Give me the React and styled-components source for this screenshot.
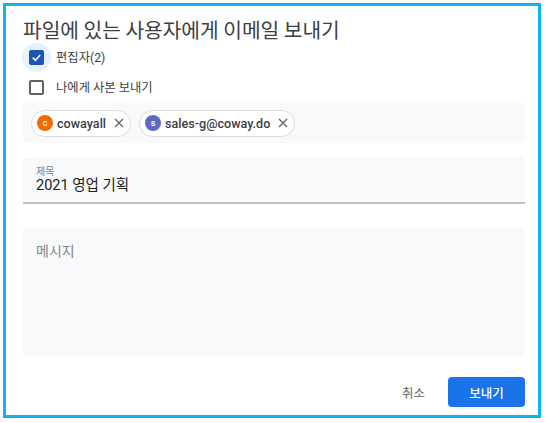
import React from "react";
import styled, { createGlobalStyle } from "styled-components";

const GlobalStyle = createGlobalStyle`
    html, body {
        margin: 0;
        padding: 0;
        background: #ffffff;
    }
    body {
        font-family: Roboto, "Noto Sans CJK KR", "Noto Sans", sans-serif;
        color: #3c4043;
    }
`;

const Frame = styled.div`
    box-sizing: border-box;
    margin: 3px;
    width: 538px;
    height: 415px;
    border: 3px solid #12b2f1;
    padding: 11px 13px 0 17px;
    display: flex;
    flex-direction: column;
`;

const Title = styled.h2`
    margin: 0;
    font-family: "Noto Sans CJK KR", sans-serif;
    font-size: 20.3px;
    line-height: 25px;
    font-weight: 400;
    color: #3c4043;
`;

const CheckRow = styled.label`
    display: flex;
    align-items: center;
    gap: 5px;
    height: 30px;
    font-family: Roboto, "Noto Sans CJK KR", sans-serif;
    font-size: 12.3px;
    color: #3c4043;
`;

const Control = styled.span`
    width: 29px;
    height: 29px;
    margin-left: -1px;
    border-radius: 50%;
    background: ${(p) => (p.$checked ? "#e8f0fe" : "transparent")};
    display: grid;
    place-items: center;
`;

const Box = styled.span`
    box-sizing: border-box;
    width: 15px;
    height: 15px;
    border-radius: 2px;
    border: 2px solid ${(p) => (p.$checked ? "#1a55b5" : "#5f6368")};
    background: ${(p) => (p.$checked ? "#1a55b5" : "#fff")};
    display: grid;
    place-items: center;
`;

const ChipArea = styled.div`
    margin-top: 1px;
    height: 40px;
    box-sizing: border-box;
    background: #f8f9fa;
    border-radius: 4px;
    padding: 6px 8px;
    display: flex;
    align-items: center;
    gap: 8px;
`;

const Chip = styled.div`
    box-sizing: border-box;
    height: 27px;
    border: 1px solid #dadce0;
    background: #fff;
    border-radius: 14px;
    padding: 0 6px 0 5px;
    display: flex;
    align-items: center;
    gap: 4px;
    font-family: Roboto, sans-serif;
    font-size: 12.6px;
    font-weight: 500;
    color: #3c4043;
`;

const Avatar = styled.span`
    width: 16px;
    height: 16px;
    border-radius: 50%;
    background: ${(p) => p.$color};
    color: #fff;
    font-size: 9px;
    font-weight: 500;
    display: grid;
    place-items: center;
    line-height: 1;
`;

const Remove = styled.span`
    margin-left: 4px;
    display: grid;
    place-items: center;
    color: #5f6368;
`;

const Field = styled.div`
    margin-top: 14px;
    background: #f8f9fa;
    border-radius: 4px 4px 0 0;
    border-bottom: 2px solid #bdc1c6;
    padding: 8px 13px 7px;
    display: flex;
    flex-direction: column;
`;

const FieldLabel = styled.span`
    font-family: "Noto Sans CJK KR", sans-serif;
    font-size: 10px;
    line-height: 12px;
    color: #80868b;
`;

const FieldValue = styled.span`
    font-family: Roboto, "Noto Sans CJK KR", sans-serif;
    font-size: 14.5px;
    line-height: 18px;
    color: #202124;
`;

const Message = styled.div`
    margin-top: 24px;
    height: 129px;
    box-sizing: border-box;
    background: #f8f9fa;
    border-radius: 4px;
    padding: 13px 13px;
    font-family: "Noto Sans CJK KR", sans-serif;
    font-size: 14px;
    line-height: 18px;
    color: #80868b;
`;

const Footer = styled.div`
    margin-top: 20px;
    display: flex;
    justify-content: flex-end;
    align-items: center;
    gap: 11px;
`;

const TextButton = styled.button`
    border: 0;
    background: transparent;
    height: 30px;
    padding: 0 12px;
    font-family: "Noto Sans CJK KR", sans-serif;
    font-size: 12.5px;
    color: #5f6368;
`;

const PrimaryButton = styled.button`
    border: 0;
    width: 77px;
    height: 30px;
    border-radius: 4px;
    background: #1a73e8;
    color: #fff;
    font-family: "Noto Sans CJK KR", sans-serif;
    font-size: 12.5px;
    font-weight: 500;
`;

const CloseIcon = () => (
    <svg width="10" height="10" viewBox="0 0 10 10">
        <path d="M1 1 L9 9 M9 1 L1 9" stroke="currentColor" strokeWidth="1.3" />
    </svg>
);

const chips = [
    { letter: "c", name: "cowayall", color: "#ef6c00" },
    { letter: "s", name: "sales-g@coway.do", color: "#5c6bc0" },
];

const App = () => {
    return (
        <>
            <GlobalStyle />
            <Frame>
                <Title>파일에 있는 사용자에게 이메일 보내기</Title>
                <CheckRow>
                    <Control $checked>
                        <Box $checked>
                            <svg width="11" height="11" viewBox="0 0 12 12">
                                <path
                                    d="M2 6.2 L4.8 9 L10 3.3"
                                    fill="none"
                                    stroke="#fff"
                                    strokeWidth="1.8"
                                />
                            </svg>
                        </Box>
                    </Control>
                    편집자(2)
                </CheckRow>
                <CheckRow>
                    <Control>
                        <Box />
                    </Control>
                    나에게 사본 보내기
                </CheckRow>
                <ChipArea>
                    {chips.map((c) => (
                        <Chip key={c.name}>
                            <Avatar $color={c.color}>{c.letter}</Avatar>
                            {c.name}
                            <Remove>
                                <CloseIcon />
                            </Remove>
                        </Chip>
                    ))}
                </ChipArea>
                <Field>
                    <FieldLabel>제목</FieldLabel>
                    <FieldValue>2021 영업 기획</FieldValue>
                </Field>
                <Message>메시지</Message>
                <Footer>
                    <TextButton>취소</TextButton>
                    <PrimaryButton>보내기</PrimaryButton>
                </Footer>
            </Frame>
        </>
    );
};

export default App;
